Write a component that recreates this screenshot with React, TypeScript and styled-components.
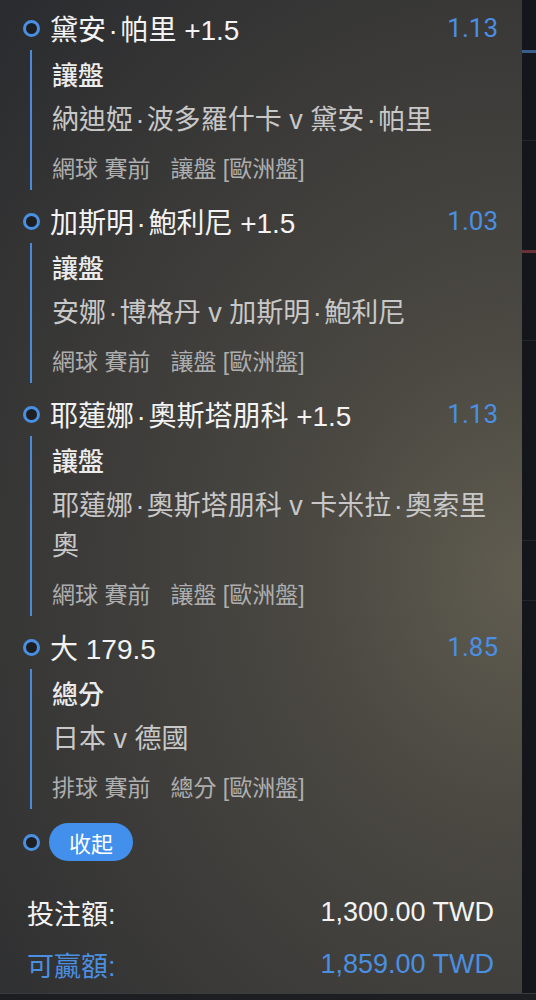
import React from "react";
import styled, { createGlobalStyle } from "styled-components";

const Global = createGlobalStyle`
  html, body { margin: 0; padding: 0; background: #15161b; }
  body { font-family: "Liberation Sans", "Noto Sans CJK TC", sans-serif; }
  * { box-sizing: border-box; }
`;

const Page = styled.div`
  width: 536px;
  height: 1000px;
  display: flex;
  flex-direction: column;
  overflow: hidden;
`;

const Main = styled.div`
  flex: 1;
  display: flex;
`;

const Panel = styled.div`
  width: 522px;
  padding-top: 8px;
  display: flex;
  flex-direction: column;
  background:
    radial-gradient(ellipse 700px 820px at 100% 58%, rgba(96, 92, 80, 1) 0%, rgba(80, 77, 69, 0.85) 30%, rgba(44, 44, 47, 0) 100%),
    #2b2c2f;
`;

const Side = styled.div`
  flex: 1;
  background:
    linear-gradient(to bottom,
      transparent 50px, #3a5e8c 50px, #3a5e8c 53px, transparent 53px,
      transparent 140px, #23252c 140px, #23252c 141px, transparent 141px,
      transparent 250px, #6a3038 250px, #6a3038 253px, transparent 253px,
      transparent 340px, #23252c 340px, #23252c 341px, transparent 341px,
      transparent 540px, #23252c 540px, #23252c 541px, transparent 541px,
      transparent 600px, #23252c 600px, #23252c 601px, transparent 601px
    ),
    #15161b;
`;

const BottomBar = styled.div`
  height: 7px;
  background: #1d1e22;
  border-top: 1px solid #3a3b3f;
`;

const Item = styled.div`
  display: flex;
  flex-direction: column;
  margin-bottom: 11px;
`;

const Head = styled.div`
  height: 40px;
  display: flex;
  align-items: center;
  padding-left: 23px;
  padding-right: 24px;
  gap: 10px;
`;

const Dot = styled.span`
  width: 17px;
  height: 17px;
  border-radius: 50%;
  border: 3.5px solid #4a90e2;
  background: #1e1f22;
  flex: none;
`;

const Title = styled.span`
  flex: 1;
  font-size: 28px;
  color: #f3f3f3;
  white-space: nowrap;
`;

const Odds = styled.span`
  font-family: Roboto, "Liberation Sans", sans-serif;
  font-size: 26px;
  font-weight: 400;
  color: #4a8fe2;
`;

const Sep = styled.span`
  padding: 0 0.09em;
`;

const Body = styled.div`
  margin-top: 2px;
  margin-left: 30px;
  border-left: 2px solid #4a8ad8;
  padding-left: 20px;
  padding-right: 30px;
  display: flex;
  flex-direction: column;
`;

const Market = styled.div`
  height: 46px;
  display: flex;
  align-items: center;
  font-size: 26px;
  font-weight: 500;
  color: #ececec;
`;

const Match = styled.div`
  padding: 4px 0;
  font-size: 27px;
  line-height: 40px;
  color: #c8c8c8;
`;

const Meta = styled.div`
  height: 46px;
  display: flex;
  align-items: center;
  gap: 20px;
  font-size: 23px;
  color: #aeaeae;
  white-space: pre;
`;

const CollapseRow = styled.div`
  height: 40px;
  margin-top: 2px;
  display: flex;
  align-items: center;
  padding-left: 23px;
  gap: 9px;
`;

const Pill = styled.button`
  height: 38px;
  padding: 0 20px;
  border: none;
  border-radius: 19px;
  background: #4290ec;
  color: #fff;
  font-family: "Liberation Sans", "Noto Sans CJK TC", sans-serif;
  font-size: 22px;
`;

const Footer = styled.div`
  margin-top: 24px;
  padding: 0 28px 0 27px;
  display: flex;
  flex-direction: column;
`;

const SumRow = styled.div<{ $accent?: boolean }>`
  height: 52px;
  display: flex;
  align-items: center;
  justify-content: space-between;
  font-size: 27px;
  color: ${(p) => (p.$accent ? "#4b8fe0" : "#f3f3f3")};
`;

type Bet = {
  title: string;
  odds: string;
  market: string;
  match: string;
  sport: string;
  label: string;
};

const bets: Bet[] = [
  {
    title: "黛安·帕里 +1.5",
    odds: "1.13",
    market: "讓盤",
    match: "納迪婭·波多羅什卡 v 黛安·帕里",
    sport: "網球 賽前",
    label: "讓盤 [歐洲盤]",
  },
  {
    title: "加斯明·鮑利尼 +1.5",
    odds: "1.03",
    market: "讓盤",
    match: "安娜·博格丹 v 加斯明·鮑利尼",
    sport: "網球 賽前",
    label: "讓盤 [歐洲盤]",
  },
  {
    title: "耶蓮娜·奧斯塔朋科 +1.5",
    odds: "1.13",
    market: "讓盤",
    match: "耶蓮娜·奧斯塔朋科 v 卡米拉·奧索里奧",
    sport: "網球 賽前",
    label: "讓盤 [歐洲盤]",
  },
  {
    title: "大 179.5",
    odds: "1.85",
    market: "總分",
    match: "日本 v 德國",
    sport: "排球 賽前",
    label: "總分 [歐洲盤]",
  },
];

function Names({ text }: { text: string }) {
  const parts = text.split("·");
  return (
    <>
      {parts.map((p, i) => (
        <React.Fragment key={i}>
          {i > 0 && <Sep>·</Sep>}
          {p}
        </React.Fragment>
      ))}
    </>
  );
}

export default function App() {
  return (
    <Page>
      <Global />
      <Main>
        <Panel>
          {bets.map((b, i) => (
            <Item key={i}>
              <Head>
                <Dot />
                <Title>
                  <Names text={b.title} />
                </Title>
                <Odds>{b.odds}</Odds>
              </Head>
              <Body>
                <Market>{b.market}</Market>
                <Match>
                  <Names text={b.match} />
                </Match>
                <Meta>
                  <span>{b.sport}</span>
                  <span>{b.label}</span>
                </Meta>
              </Body>
            </Item>
          ))}
          <CollapseRow>
            <Dot />
            <Pill>收起</Pill>
          </CollapseRow>
          <Footer>
            <SumRow>
              <span>投注額:</span>
              <span>1,300.00 TWD</span>
            </SumRow>
            <SumRow $accent>
              <span>可贏額:</span>
              <span>1,859.00 TWD</span>
            </SumRow>
          </Footer>
        </Panel>
        <Side />
      </Main>
      <BottomBar />
    </Page>
  );
}
